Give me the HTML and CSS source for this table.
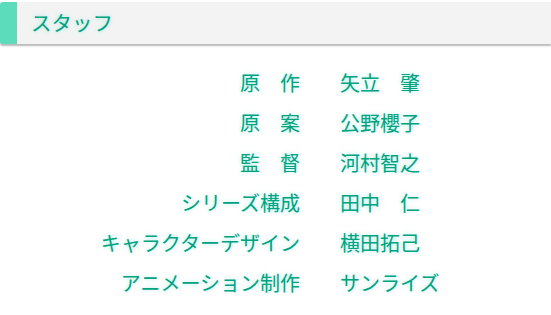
FILE: index.html
```html
<!DOCTYPE html>
<html lang="ja">
<head>
<meta charset="utf-8">
<title>スタッフ</title>
<link rel="stylesheet" href="styles.css">
</head>
<body>
<section class="staff">
  <h2 class="staff-title">スタッフ</h2>
  <dl class="staff-list">
    <dt>原　作</dt><dd>矢立　肇</dd>
    <dt>原　案</dt><dd>公野櫻子</dd>
    <dt>監　督</dt><dd>河村智之</dd>
    <dt>シリーズ構成</dt><dd>田中　仁</dd>
    <dt>キャラクターデザイン</dt><dd>横田拓己</dd>
    <dt>アニメーション制作</dt><dd>サンライズ</dd>
  </dl>
</section>
</body>
</html>
```
FILE: styles.css
```css
html, body {
  margin: 0;
  padding: 0;
  background: #ffffff;
}

body {
  font-family: "Noto Sans CJK JP", "Noto Sans", sans-serif;
  color: #00a27f;
}

.staff {
  padding-top: 2px;
}

/* section heading: grey bar with a mint accent on the left */
.staff-title {
  margin: 0;
  height: 42px;
  line-height: 41px;
  font-size: 20.5px;
  font-weight: normal;
  background: #f3f3f3;
  border-left: 17px solid #5cdcba;
  border-radius: 3px 0 0 3px;
  padding-left: 14px;
  box-shadow: 0 2px 2px rgba(0, 0, 0, 0.28);
  text-shadow: 0 0 4px rgba(0, 210, 180, 0.35);
}

/* role / name pairs */
.staff-list {
  display: grid;
  grid-template-columns: 300px auto;
  column-gap: 40px;
  margin: 19px 0 0;
  font-size: 20px;
  line-height: 40px;
  text-shadow: 0 0 4px rgba(0, 210, 180, 0.35);
}

.staff-list dt {
  text-align: right;
  white-space: nowrap;
}

.staff-list dd {
  margin: 0;
  white-space: nowrap;
}
```
